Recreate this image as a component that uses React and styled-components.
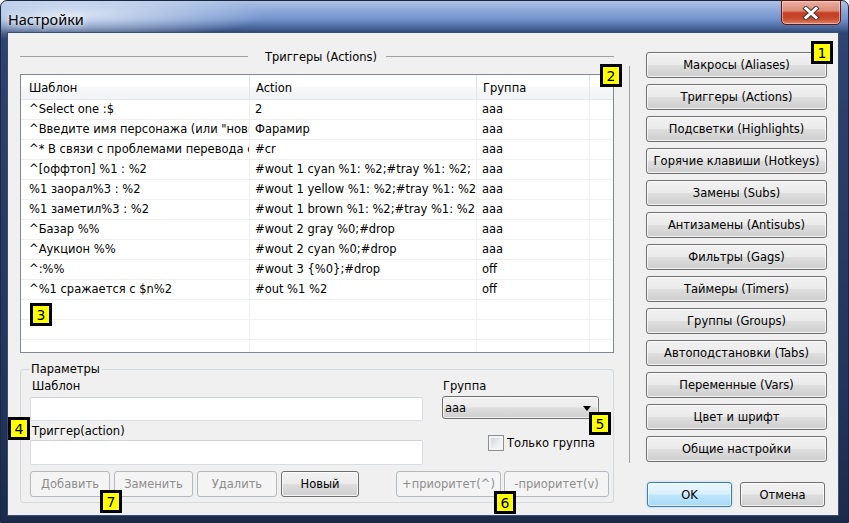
import React from 'react';
import styled, { createGlobalStyle, css } from 'styled-components';

const rows = [
  ['^Select one :$', '2', 'aaa'],
  ['^Введите имя персонажа (или "новый" для создания)', 'Фарамир', 'aaa'],
  ['^* В связи с проблемами перевода с сервера', '#cr', 'aaa'],
  ['^[оффтоп] %1 : %2', '#wout 1 cyan %1: %2;#tray %1: %2;', 'aaa'],
  ['%1 заорал%3 : %2', '#wout 1 yellow %1: %2;#tray %1: %2', 'aaa'],
  ['%1 заметил%3 : %2', '#wout 1 brown %1: %2;#tray %1: %2', 'aaa'],
  ['^Базар %%', '#wout 2 gray %0;#drop', 'aaa'],
  ['^Аукцион %%', '#wout 2 cyan %0;#drop', 'aaa'],
  ['^:%%', '#wout 3 {%0};#drop', 'off'],
  ['^%1 сражается с $n%2', '#out %1 %2', 'off'],
];

const sections = [
  'Макросы (Aliases)',
  'Триггеры (Actions)',
  'Подсветки (Highlights)',
  'Горячие клавиши (Hotkeys)',
  'Замены (Subs)',
  'Антизамены (Antisubs)',
  'Фильтры (Gags)',
  'Таймеры (Timers)',
  'Группы (Groups)',
  'Автоподстановки (Tabs)',
  'Переменные (Vars)',
  'Цвет и шрифт',
  'Общие настройки',
];

const badges = [
  { n: 1, x: 810, y: 40 },
  { n: 2, x: 599, y: 63 },
  { n: 3, x: 29, y: 302 },
  { n: 4, x: 7, y: 416 },
  { n: 5, x: 588, y: 411 },
  { n: 6, x: 493, y: 490 },
  { n: 7, x: 99, y: 489 },
];

const GlobalStyle = createGlobalStyle`
  html, body {
    margin: 0;
    padding: 0;
    background: #ffffff;
  }
  body {
    font-family: "DejaVu Sans", Verdana, sans-serif;
    font-size: 11.5px;
    color: #000;
  }
`;

const Window = styled.div`
  position: relative;
  width: 849px;
  height: 523px;
  box-sizing: border-box;
  display: flex;
  flex-direction: column;
  padding: 0 10px 7px 7px;
  border: 1px solid #1a2742;
  border-radius: 7px 7px 0 0;
  background:
    radial-gradient(ellipse 260px 34px at 70px 14px, rgba(235, 242, 250, 0.85), rgba(235, 242, 250, 0) 75%),
    linear-gradient(180deg, #aec3e4 0px, #8ea9da 9px, #7393cd 18px, #4d6aa0 26px, #2e4572 32px, #2b3f68 120px, #22345a 400px, #1c2b4a 523px);
`;

const TitleBar = styled.div`
  height: 32px;
  display: flex;
  align-items: flex-start;
  margin: 0 -9px 0 -7px;
  padding: 0 6px 0 7px;
`;

const Title = styled.div`
  font-family: "Noto Sans", "Open Sans", sans-serif;
  font-size: 14.5px;
  line-height: 20px;
  margin-top: 8px;
  color: #000;
  text-shadow: 0 0 6px rgba(255, 255, 255, 0.9), 0 0 10px rgba(255, 255, 255, 0.7);
`;

const CloseButton = styled.div`
  margin-left: auto;
  width: 60px;
  height: 25px;
  margin-top: -1px;
  box-sizing: border-box;
  border: 1px solid #5a1a12;
  border-radius: 0 0 5px 5px;
  background: linear-gradient(180deg, #eab0a3 0%, #dc8b78 42%, #c53c22 52%, #c84a30 78%, #e0846a 100%);
  box-shadow: inset 0 0 0 1px rgba(255, 220, 210, 0.55);
  display: flex;
  align-items: center;
  justify-content: center;
`;

const Client = styled.div`
  flex: 1;
  display: flex;
  background: #f0f0f0;
  box-shadow: 0 0 0 1px #3b4e72;
`;

const LeftPane = styled.div`
  width: 594px;
  margin-left: 12px;
  padding-top: 15px;
  display: flex;
  flex-direction: column;
`;

const SectionHeader = styled.div`
  height: 18px;
  display: flex;
  align-items: center;
`;

const Rule = styled.div`
  flex: 1;
  height: 0;
  border-top: 1px solid #a0a0a0;
  margin-top: -2px;
`;

const SectionTitle = styled.div`
  padding: 0 9px 0 17px;
  line-height: 18px;
`;

const TableBox = styled.div`
  margin-top: 8px;
  height: 279px;
  box-sizing: border-box;
  border: 1px solid #828790;
  background: #fff;
  overflow: hidden;
`;

const columns = css`
  display: grid;
  grid-template-columns: 229px 227px 113px 23px;
`;

const HeaderRow = styled.div`
  ${columns};
  height: 25px;
  box-sizing: border-box;
  border-bottom: 1px solid #e5e8ec;
  background: linear-gradient(180deg, #ffffff 0%, #ffffff 45%, #f6f7f9 55%, #f2f3f5 100%);
`;

const HeaderCell = styled.div`
  padding: 3px 0 0 ${p => (p.$first ? 8 : 6)}px;
  line-height: 21px;
  border-right: ${p => (p.$last ? 'none' : '1px solid #e4e6ea')};
  white-space: nowrap;
  overflow: hidden;
`;

const Row = styled.div`
  ${columns};
  height: 20px;
  box-sizing: border-box;
  border-bottom: 1px solid #f0f0f0;
`;

const Cell = styled.div`
  padding-left: ${p => (p.$first ? 8 : 5)}px;
  line-height: 19px;
  border-right: ${p => (p.$last ? 'none' : '1px solid #f0f0f0')};
  white-space: nowrap;
  overflow: hidden;
`;

const Group = styled.div`
  margin-top: 16px;
  border: 1px solid #d5d9dd;
  border-radius: 3px;
  padding: 0 4px 5px 9px;
  display: flex;
  flex-direction: column;
`;

const Legend = styled.div`
  align-self: flex-start;
  margin-top: -8px;
  padding: 0 2px 0 1px;
  line-height: 14px;
  background: #f0f0f0;
`;

const FieldsRow = styled.div`
  display: flex;
  gap: 19px;
`;

const FieldColumn = styled.div`
  width: ${p => p.$width}px;
  display: flex;
  flex-direction: column;
`;

const Label = styled.div`
  margin-top: 3px;
  padding-left: ${p => p.$indent || 0}px;
  line-height: 14px;
`;

const Input = styled.div`
  margin-top: ${p => p.$gap}px;
  height: ${p => p.$height}px;
  box-sizing: border-box;
  background: #fff;
  border: 1px solid #dadde2;
  border-top-color: #cfd3d8;
  border-radius: 2px;
`;

const Combo = styled.div`
  margin-top: 3px;
  height: 23px;
  box-sizing: border-box;
  border: 1px solid #707070;
  border-radius: 3px;
  background: linear-gradient(180deg, #f2f2f2 0%, #ebebeb 48%, #dddddd 52%, #cfcfcf 100%);
  box-shadow: inset 0 0 0 1px rgba(255, 255, 255, 0.7);
  display: flex;
  align-items: center;
  padding: 0 7px 0 2px;
`;

const ComboText = styled.span`
  flex: 1;
`;

const Arrow = styled.span`
  width: 0;
  height: 0;
  border-left: 4px solid transparent;
  border-right: 4px solid transparent;
  border-top: 5px solid #000;
  margin-top: 1px;
`;

const CheckRow = styled.div`
  margin-top: 16px;
  height: 16px;
  display: flex;
  align-items: center;
  justify-content: flex-end;
  gap: 3px;
  padding-right: 4px;
`;

const CheckBox = styled.span`
  width: 14px;
  height: 14px;
  border: 1px solid #8e8f8f;
  background: linear-gradient(135deg, #c9cdd2 0%, #eceef0 60%, #fbfbfb 100%);
  box-shadow: inset 0 0 0 2px #f4f4f4;
`;

const ButtonRow = styled.div`
  margin-top: 6px;
  display: flex;
  justify-content: space-between;
`;

const ButtonGroup = styled.div`
  display: flex;
  gap: ${p => p.$gap}px;
`;

const Button = styled.div`
  width: ${p => p.$width}px;
  height: ${p => p.$height || 26}px;
  box-sizing: border-box;
  display: flex;
  align-items: center;
  justify-content: center;
  white-space: nowrap;
  border-radius: 3px;
  border: 1px solid #707070;
  background: linear-gradient(180deg, #f2f2f2 0%, #ebebeb 48%, #dddddd 52%, #cfcfcf 100%);
  box-shadow: inset 0 0 0 1px rgba(255, 255, 255, 0.75);
  ${p =>
    p.$disabled &&
    css`
      border-color: #b5b9bc;
      background: #f4f4f4;
      box-shadow: none;
      color: #8d8d8d;
    `}
  ${p =>
    p.$default &&
    css`
      border-color: #3c7fb1;
      background: linear-gradient(180deg, #eaf6fd 0%, #d9f0fc 48%, #bee6fd 52%, #a7d9f5 100%);
      box-shadow: inset 0 0 0 1px rgba(255, 255, 255, 0.6), 0 0 2px #8cc6eb;
    `}
`;

const Divider = styled.div`
  width: 1px;
  height: 397px;
  margin: 33px 0 0 15px;
  background: #a0a0a0;
`;

const RightPane = styled.div`
  width: 181px;
  margin-left: 16px;
  padding-top: 19px;
  display: flex;
  flex-direction: column;
`;

const SectionList = styled.div`
  display: flex;
  flex-direction: column;
  gap: 6px;
`;

const DialogButtons = styled.div`
  margin-top: 20px;
  padding-left: 1px;
  display: flex;
  gap: 8px;
`;

const Badge = styled.div`
  position: absolute;
  left: ${p => p.$x}px;
  top: ${p => p.$y}px;
  width: 22px;
  height: 23px;
  box-sizing: border-box;
  border: 3px solid #000;
  background: #ffff00;
  display: flex;
  align-items: center;
  justify-content: center;
  font-size: 14px;
  line-height: 1;
`;

const CloseIcon = () => (
  <svg width="20" height="14" viewBox="0 0 20 14">
    <path d="M5 2.5 L15 11.5 M15 2.5 L5 11.5" stroke="#3d3d3d" strokeWidth="5" strokeLinecap="square" />
    <path d="M5 2.5 L15 11.5 M15 2.5 L5 11.5" stroke="#ffffff" strokeWidth="3" strokeLinecap="square" />
  </svg>
);

const App = () => {
  const empty = [0, 1, 2];
  return (
    <>
      <GlobalStyle />
      <Window>
        <TitleBar>
          <Title>Настройки</Title>
          <CloseButton>
            <CloseIcon />
          </CloseButton>
        </TitleBar>
        <Client>
          <LeftPane>
            <SectionHeader>
              <Rule />
              <SectionTitle>Триггеры (Actions)</SectionTitle>
              <Rule />
            </SectionHeader>
            <TableBox>
              <HeaderRow>
                <HeaderCell $first>Шаблон</HeaderCell>
                <HeaderCell>Action</HeaderCell>
                <HeaderCell>Группа</HeaderCell>
                <HeaderCell $last />
              </HeaderRow>
              {rows.map((r, i) => (
                <Row key={i}>
                  <Cell $first>{r[0]}</Cell>
                  <Cell>{r[1]}</Cell>
                  <Cell>{r[2]}</Cell>
                  <Cell $last />
                </Row>
              ))}
              {empty.map(i => (
                <Row key={`e${i}`}>
                  <Cell $first />
                  <Cell />
                  <Cell />
                  <Cell $last />
                </Row>
              ))}
            </TableBox>
            <Group>
              <Legend>Параметры</Legend>
              <FieldsRow>
                <FieldColumn $width={393}>
                  <Label $indent={2}>Шаблон</Label>
                  <Input $gap={4} $height={24} />
                  <Label $indent={2}>Триггер(action)</Label>
                  <Input $gap={2} $height={25} />
                </FieldColumn>
                <FieldColumn $width={157}>
                  <Label $indent={1}>Группа</Label>
                  <Combo>
                    <ComboText>aaa</ComboText>
                    <Arrow />
                  </Combo>
                  <CheckRow>
                    <CheckBox />
                    <span>Только группа</span>
                  </CheckRow>
                </FieldColumn>
              </FieldsRow>
              <ButtonRow>
                <ButtonGroup $gap={4}>
                  <Button $width={80} $disabled>Добавить</Button>
                  <Button $width={79} $disabled>Заменить</Button>
                  <Button $width={80} $disabled>Удалить</Button>
                  <Button $width={78}>Новый</Button>
                </ButtonGroup>
                <ButtonGroup $gap={3}>
                  <Button $width={105} $disabled>+приоритет(^)</Button>
                  <Button $width={105} $disabled>-приоритет(v)</Button>
                </ButtonGroup>
              </ButtonRow>
            </Group>
          </LeftPane>
          <Divider />
          <RightPane>
            <SectionList>
              {sections.map(s => (
                <Button key={s} $width={181}>{s}</Button>
              ))}
            </SectionList>
            <DialogButtons>
              <Button $width={85} $height={25} $default>OK</Button>
              <Button $width={85} $height={25}>Отмена</Button>
            </DialogButtons>
          </RightPane>
        </Client>
        {badges.map(b => (
          <Badge key={b.n} $x={b.x} $y={b.y}>{b.n}</Badge>
        ))}
      </Window>
    </>
  );
};

export default App;
